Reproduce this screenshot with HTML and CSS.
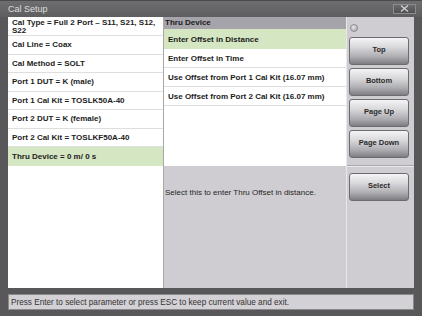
FILE: index.html
```html
<!DOCTYPE html>
<html>
<head>
<meta charset="utf-8">
<link rel="stylesheet" href="styles.css">
</head>
<body>
<div class="window">
  <div class="titlebar">
    <span class="title">Cal Setup</span>
    <span class="close"><svg width="9" height="7" viewBox="0 0 9 7"><path d="M1 0.5 L8 6.5 M8 0.5 L1 6.5" stroke="#d4d4d4" stroke-width="1.2"/></svg></span>
  </div>
  <div class="main">
    <div class="left">
      <div class="row two">Cal Type = Full 2 Port – S11, S21, S12, S22</div>
      <div class="row">Cal Line = Coax</div>
      <div class="row">Cal Method = SOLT</div>
      <div class="row">Port 1 DUT = K (male)</div>
      <div class="row">Port 1 Cal Kit = TOSLK50A-40</div>
      <div class="row">Port 2 DUT = K (female)</div>
      <div class="row">Port 2 Cal Kit = TOSLKF50A-40</div>
      <div class="row sel">Thru Device = 0 m/ 0 s</div>
    </div>
    <div class="middle">
      <div class="head">Thru Device</div>
      <div class="list">
        <div class="opt sel">Enter Offset in Distance</div>
        <div class="opt">Enter Offset in Time</div>
        <div class="opt">Use Offset from Port 1 Cal Kit (16.07 mm)</div>
        <div class="opt">Use Offset from Port 2 Cal Kit (16.07 mm)</div>
      </div>
      <div class="info">Select this to enter Thru Offset in distance.</div>
    </div>
    <div class="right">
      <div class="nav">
        <span class="radio"></span>
        <div class="btn">Top</div>
        <div class="btn">Bottom</div>
        <div class="btn">Page Up</div>
        <div class="btn">Page Down</div>
      </div>
      <div class="act">
        <div class="btn">Select</div>
      </div>
    </div>
  </div>
  <div class="status">Press Enter to select parameter or press ESC to keep current value and exit.</div>
</div>
</body>
</html>
```
FILE: styles.css
```css
html, body {
  margin: 0;
  padding: 0;
  background: #58585a;
}
.window {
  width: 422px;
  height: 316px;
  display: flex;
  flex-direction: column;
  background: #58585a;
  font-family: "Liberation Sans", Arial, sans-serif;
  color: #1c1c1c;
}
.titlebar {
  height: 17px;
  display: flex;
  align-items: center;
  justify-content: space-between;
  padding: 0 6px 0 8px;
  background: linear-gradient(#6e6e70, #5e5e60);
  border-top: 1px solid #4a4a4a;
  box-sizing: border-box;
}
.title {
  color: #dedede;
  font-size: 9px;
}
.close {
  width: 23px;
  height: 10px;
  box-sizing: border-box;
  border: 1px solid #8c8c8c;
  background: linear-gradient(#6a6a6c, #505052);
  display: flex;
  align-items: center;
  justify-content: center;
  margin-top: -1px;
}
.close svg { display: block; }
.main {
  display: flex;
  margin: 0 8px;
  height: 271px;
}
.left {
  width: 155px;
  background: #fff;
  border-right: 1px solid #a8a8a8;
  font-weight: bold;
  font-size: 8px;
}
.row {
  height: 18.5px;
  box-sizing: border-box;
  border-bottom: 1px solid #dedede;
  padding: 0 4px;
  display: flex;
  align-items: center;
}
.row.two {
  height: 19px;
  line-height: 8px;
  padding-top: 1px;
}
.row.sel {
  background: #d5e6c2;
  border-bottom: none;
}
.middle {
  width: 182px;
  display: flex;
  flex-direction: column;
  font-size: 8px;
}
.head {
  height: 12px;
  background: #a6a4ab;
  font-weight: bold;
  padding-left: 1px;
  line-height: 12px;
}
.list {
  height: 137px;
  background: #fff;
  font-weight: bold;
}
.opt {
  height: 19px;
  box-sizing: border-box;
  border-bottom: 1px solid #dedede;
  padding-left: 4px;
  display: flex;
  align-items: center;
}
.opt.sel {
  height: 20px;
  background: #d5e6c2;
  border-bottom: none;
}
.info {
  flex: 1;
  background: #cfcdd1;
  padding: 22px 0 0 1px;
  color: #262626;
}
.right {
  width: 67px;
  background: #cfcdd1;
  border-left: 1px solid #e9e9eb;
  display: flex;
  flex-direction: column;
}
.nav {
  height: 149px;
  box-sizing: border-box;
  padding: 7px 0 0 2px;
  border-bottom: 1px solid #a9a8ac;
  display: flex;
  flex-direction: column;
  gap: 3px;
}
.radio {
  width: 8px;
  height: 8px;
  flex: none;
  border-radius: 50%;
  box-sizing: border-box;
  border: 1px solid #8d8d90;
  background: radial-gradient(circle at 40% 35%, #e8e8ea, #9d9da0);
  margin: 0 0 2px 1px;
}
.act {
  border-top: 1px solid #e9e9eb;
  padding: 6px 0 0 2px;
}
.btn {
  width: 60px;
  height: 28px;
  flex: none;
  box-sizing: border-box;
  border: 1px solid #6c6c6f;
  border-radius: 3px;
  background: linear-gradient(#f4f4f6 0%, #d9d8db 35%, #aeadb1 72%, #7e7d81 100%);
  display: flex;
  align-items: center;
  justify-content: center;
  padding-bottom: 3px;
  font-weight: bold;
  font-size: 7.5px;
  color: #2a2a2a;
}
.status {
  margin: 6px 8px 0;
  height: 16px;
  box-sizing: border-box;
  border: 1px solid #8a8a8c;
  background: #d3d1d5;
  font-size: 8.2px;
  color: #333;
  padding-left: 2px;
  display: flex;
  align-items: center;
}
```
